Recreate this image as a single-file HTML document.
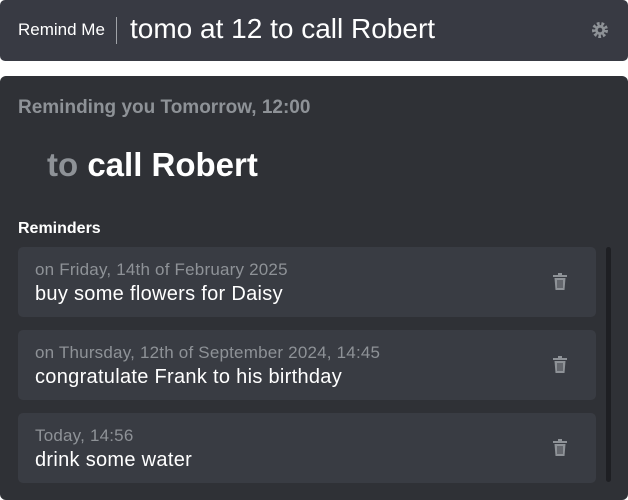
<!DOCTYPE html>
<html><head><style>
body{margin:0;width:628px;height:500px;background:#fff;font-family:"Liberation Sans",sans-serif;position:relative;overflow:hidden}
.top{position:absolute;left:0;top:0;width:628px;height:61px;background:#383a43;border-radius:5px}
.lbl{position:absolute;left:18px;top:20px;font-size:17px;color:#fff}
.sep{position:absolute;left:116px;top:17px;width:1px;height:27px;background:#a0a3a8}
.inp{position:absolute;left:130px;top:13px;font-size:28px;color:#fff}
.panel{position:absolute;left:0;top:76px;width:628px;height:424px;background:#2f3136;border-radius:6px}
.rem{position:absolute;left:18px;top:97px;font-size:19px;color:#8e9297;font-weight:bold}
.big{position:absolute;left:47px;top:146px;font-size:33px;font-weight:bold;color:#fff}
.big span{color:#8e9297}
.hd{position:absolute;left:18px;top:220px;font-size:16px;font-weight:bold;color:#fff}
.card{position:absolute;left:18px;width:578px;height:70px;background:#393c43;border-radius:5px}
.d{position:absolute;left:17px;top:13px;font-size:17px;letter-spacing:.2px;color:#8e9297}
.t{position:absolute;left:17px;top:36px;font-size:20px;letter-spacing:.3px;color:#fff}
.tr{position:absolute;left:535px;top:26px}
.sb{position:absolute;left:606px;top:247px;width:5px;height:235px;background:#1e1f23;border-radius:3px}
</style></head><body>
<div class="top"><div class="lbl">Remind Me</div><div class="sep"></div><div class="inp">tomo at 12 to call Robert</div>
<svg style="position:absolute;left:591px;top:21px" width="18" height="18" viewBox="0 0 18 18"><circle cx="9" cy="9" r="6" fill="none" stroke="#8e9297" stroke-width="4" stroke-dasharray="2.5 1.7"/><circle cx="9" cy="9" r="5" fill="#8e9297"/><circle cx="9" cy="9" r="2.3" fill="#383a43"/></svg></div>
<div class="panel"></div>
<div class="rem">Reminding you Tomorrow, 12:00</div>
<div class="big"><span>to</span> call Robert</div>
<div class="hd">Reminders</div>
<div class="sb"></div>
<div class="card" style="top:247px"><div class="d">on Friday, 14th of February 2025</div><div class="t">buy some flowers for Daisy</div><svg class="tr" width="14" height="17" viewBox="0 0 14 17"><rect x="5" y="0" width="4" height="2" fill="#8e9297"/><rect x="0" y="2" width="14" height="2" fill="#8e9297"/><path d="M1.5 5h11l-1 12h-9z" fill="#8e9297"/><path d="M5 7v8M7 7v8M9 7v8" stroke="#393c43" stroke-width="1"/></svg></div>
<div class="card" style="top:330px"><div class="d">on Thursday, 12th of September 2024, 14:45</div><div class="t">congratulate Frank to his birthday</div><svg class="tr" width="14" height="17" viewBox="0 0 14 17"><rect x="5" y="0" width="4" height="2" fill="#8e9297"/><rect x="0" y="2" width="14" height="2" fill="#8e9297"/><path d="M1.5 5h11l-1 12h-9z" fill="#8e9297"/><path d="M5 7v8M7 7v8M9 7v8" stroke="#393c43" stroke-width="1"/></svg></div>
<div class="card" style="top:413px"><div class="d">Today, 14:56</div><div class="t">drink some water</div><svg class="tr" width="14" height="17" viewBox="0 0 14 17"><rect x="5" y="0" width="4" height="2" fill="#8e9297"/><rect x="0" y="2" width="14" height="2" fill="#8e9297"/><path d="M1.5 5h11l-1 12h-9z" fill="#8e9297"/><path d="M5 7v8M7 7v8M9 7v8" stroke="#393c43" stroke-width="1"/></svg></div>
</body></html>
